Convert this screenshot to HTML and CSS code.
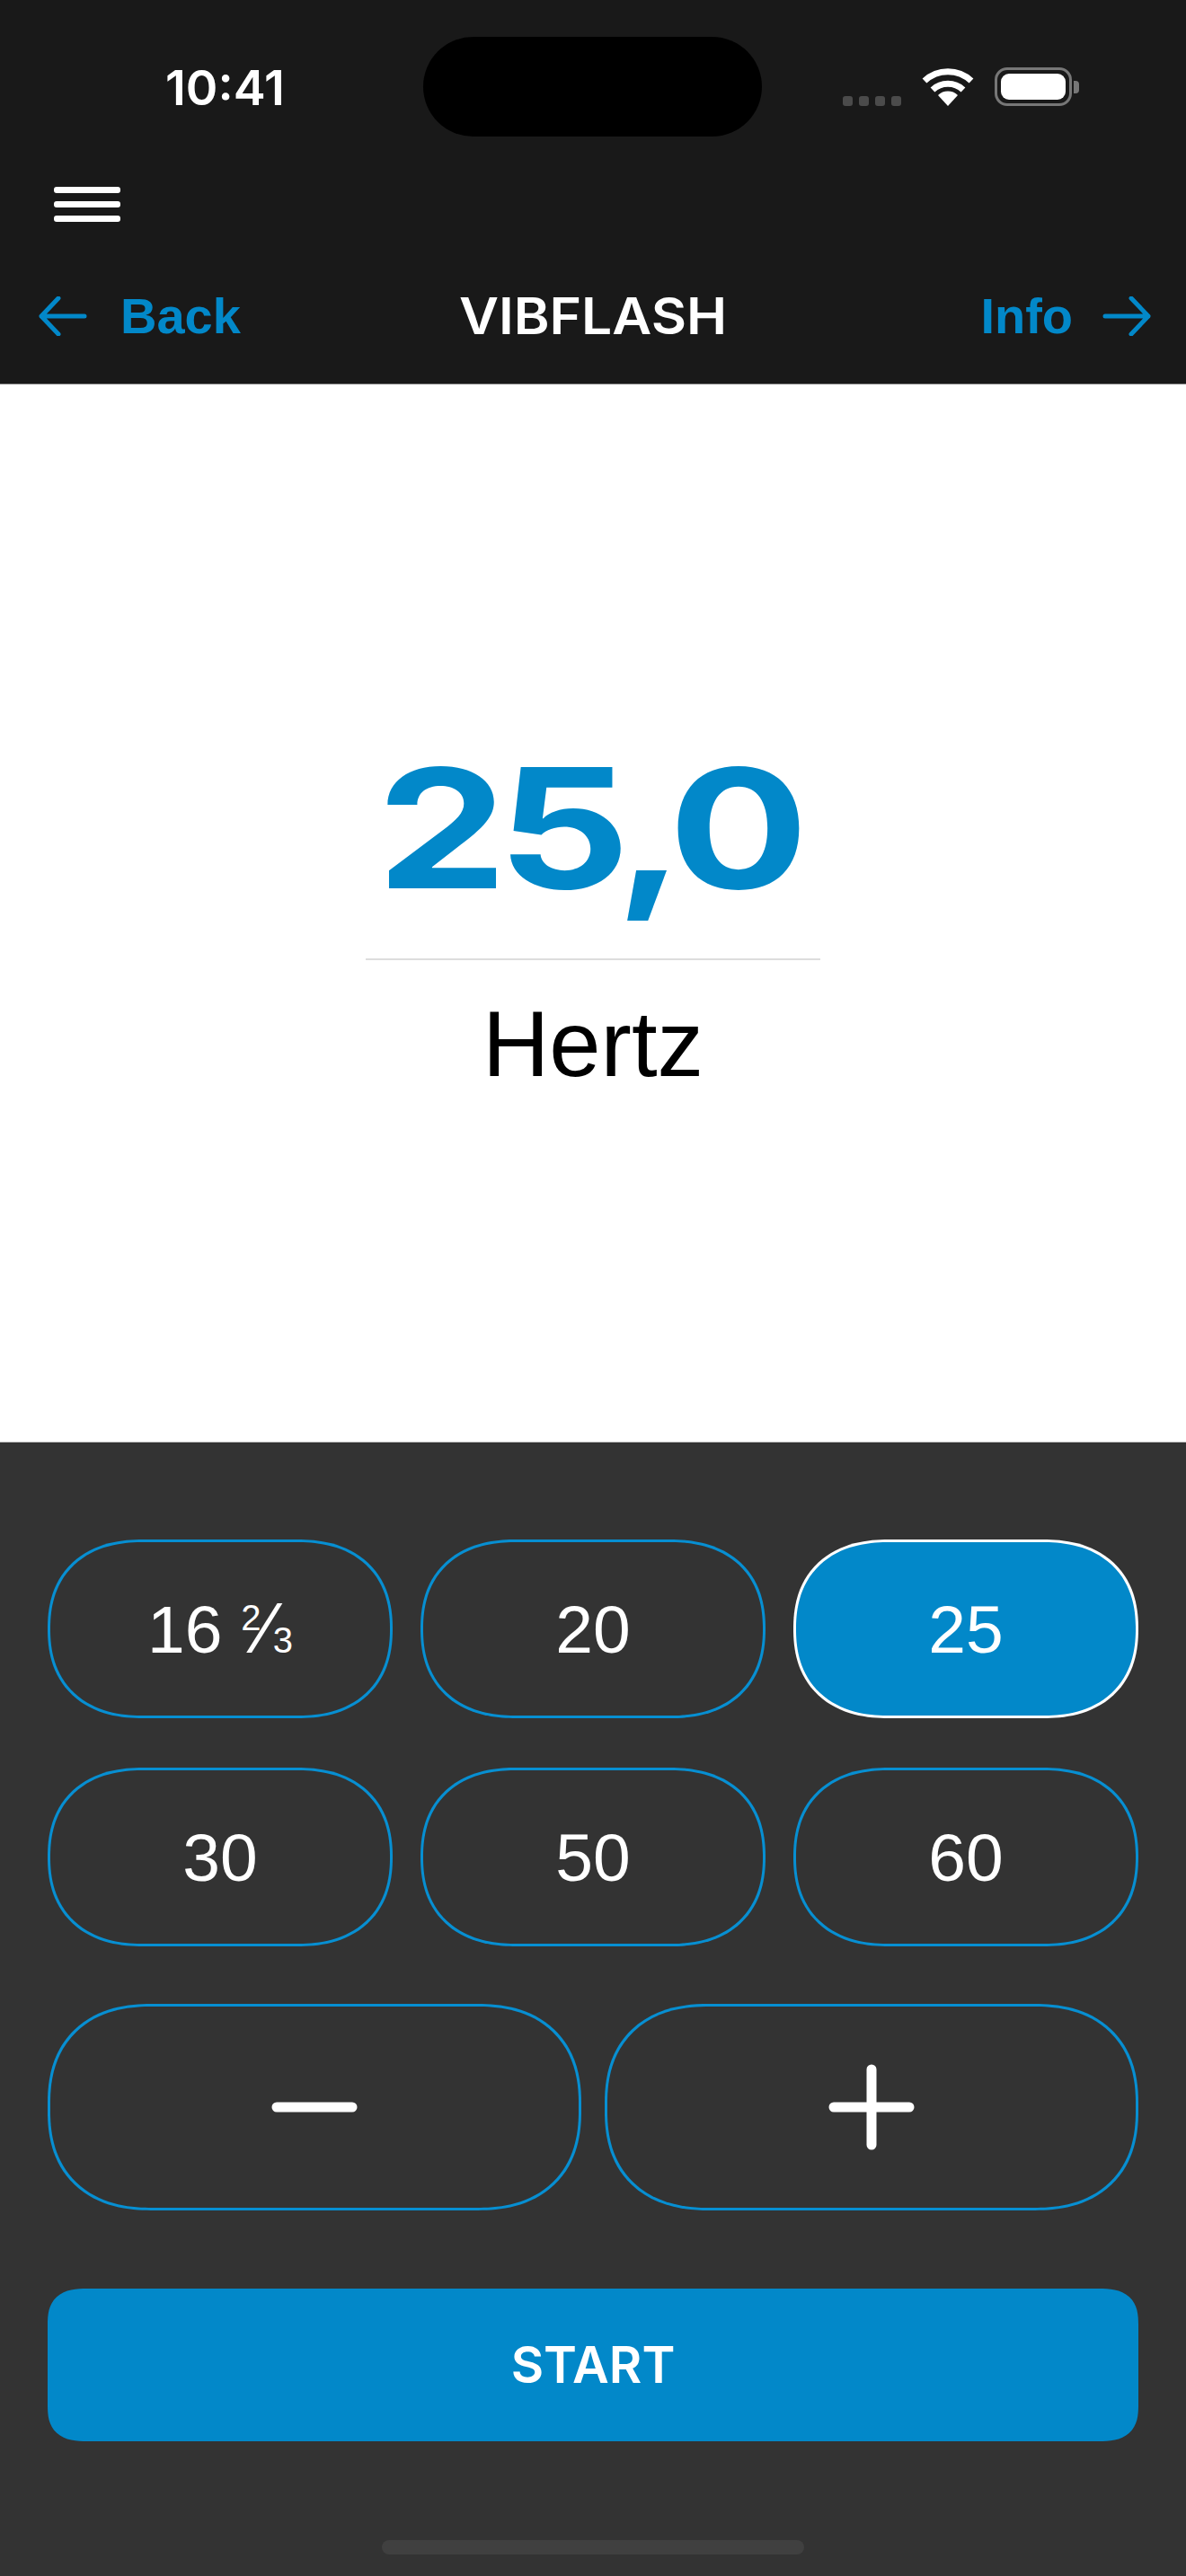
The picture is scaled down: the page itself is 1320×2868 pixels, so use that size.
FILE: index.html
```html
<!DOCTYPE html>
<html lang="de"><head>
<meta charset="utf-8">
<meta name="viewport" content="width=device-width, initial-scale=1.0">
<title>Vibflash</title>
<link rel="stylesheet" href="styles.css">
</head><body>

<div class="phone">

	<div class="header">
		<div class="status">
			<div class="time">10:41</div>
			<div class="island"></div>
			<div class="status-icons">
				<div class="cell"><span></span><span></span><span></span><span></span></div>
				<svg class="wifi" width="58" height="43" viewBox="0 0 58 43">
					<path d="M3 15 A38 38 0 0 1 55 15" />
					<path d="M12 25 A25 25 0 0 1 46 25" />
					<path class="wedge" d="M29 43 L18 31 A16 16 0 0 1 40 31 Z" />
				</svg>
				<div class="battery"><div class="battery-fill"></div></div>
				<div class="battery-cap"></div>
			</div>
		</div>

		<div class="menu-row">
			<div class="burger"><span></span><span></span><span></span></div>
		</div>

		<div class="nav">
			<a class="nav-link">
				<svg class="arrow" width="54" height="44" viewBox="0 0 54 44"><path d="M51 22 H3 M22 2 L3 22 L22 42" /></svg>
				Back
			</a>
			<div class="logo"><span>VIBFLASH</span></div>
			<a class="nav-link right">
				Info
				<svg class="arrow" width="54" height="44" viewBox="0 0 54 44"><path d="M3 22 H51 M32 2 L51 22 L32 42" /></svg>
			</a>
		</div>
	</div>

	<div class="display">
		<div class="value"><span>25,0</span></div>
		<div class="divider"></div>
		<div class="unit">Hertz</div>
	</div>

	<div class="controls">
		<div class="presets">
			<div class="pill"><div>16 <sup>2</sup><span class="slash">⁄</span><sub>3</sub></div></div>
			<div class="pill">20</div>
			<div class="pill active">25</div>
			<div class="pill">30</div>
			<div class="pill">50</div>
			<div class="pill">60</div>
		</div>
		<div class="steppers">
			<div class="step"><svg width="96" height="96" viewBox="0 0 96 96"><path d="M6 48 H90" /></svg></div>
			<div class="step"><svg width="96" height="96" viewBox="0 0 96 96"><path d="M6 48 H90 M48 6 V90" /></svg></div>
		</div>
		<div class="start">START</div>
		<div class="home-bar"></div>
	</div>

</div>

</body></html>
```

FILE: styles.css
```css
html, body {
	margin : 0 ;
	padding : 0 ;
	background-color : #333333 ;
	}
.phone {
	width : 1320px ;
	height : 2868px ;
	display : flex ;
	flex-direction : column ;
	overflow : hidden ;
	font-family : "Liberation Sans", Arial, sans-serif ;
	}

/* top bar */
.header {
	height : 427px ;
	flex : none ;
	background-color : #191919 ;
	border-bottom : 1px solid #777777 ;
	}
.status {
	height : 153px ;
	padding-top : 41px ;
	box-sizing : border-box ;
	display : flex ;
	}
.time {
	width : 471px ;
	padding : 30px 0 0 184px ;
	box-sizing : border-box ;
	color : white ;
	font : 600 54px/54px Inter, sans-serif ;
	}
.island {
	width : 377px ;
	height : 111px ;
	border-radius : 56px ;
	background-color : black ;
	}
.status-icons {
	display : flex ;
	align-items : flex-end ;
	height : 77px ;
	padding-left : 90px ;
	}
.cell {
	display : flex ;
	gap : 7px ;
	}
.cell span {
	width : 11px ;
	height : 11px ;
	border-radius : 3px ;
	background-color : #4b4b4b ;
	}
.wifi {
	margin-left : 23px ;
	fill : none ;
	stroke : white ;
	stroke-width : 7 ;
	}
.wifi .wedge {
	fill : white ;
	stroke : none ;
	}
.battery {
	width : 86px ;
	height : 43px ;
	margin-left : 23px ;
	padding : 4px ;
	box-sizing : border-box ;
	border : 3px solid #777777 ;
	border-radius : 14px ;
	}
.battery-fill {
	height : 100% ;
	border-radius : 9px ;
	background-color : white ;
	}
.battery-cap {
	width : 6px ;
	height : 14px ;
	margin : 0 0 14px 2px ;
	border-radius : 0 4px 4px 0 ;
	background-color : #777777 ;
	}
.menu-row {
	padding : 55px 0 0 60px ;
	}
.burger {
	width : 74px ;
	display : flex ;
	flex-direction : column ;
	gap : 9.5px ;
	}
.burger span {
	height : 6.5px ;
	border-radius : 3px ;
	background-color : white ;
	}
.nav {
	margin-top : 83px ;
	padding : 0 39px 0 43px ;
	height : 44px ;
	display : grid ;
	grid-template-columns : 1fr auto 1fr ;
	align-items : center ;
	}
.nav-link {
	display : flex ;
	align-items : center ;
	gap : 37px ;
	color : #0288c9 ;
	font : 700 56px/44px "Liberation Sans", Arial, sans-serif ;
	}
.nav-link.right {
	justify-content : flex-end ;
	gap : 33px ;
	}
.arrow {
	fill : none ;
	stroke : #0288c9 ;
	stroke-width : 5 ;
	stroke-linecap : round ;
	stroke-linejoin : round ;
	}
.logo {
	margin-left : -3px ;
	color : white ;
	font : 600 56px/44px Inter, sans-serif ;
	}
.logo span {
	display : inline-block ;
	transform : scaleX( 1.08 ) ;
	}

/* frequency read-out */
.display {
	flex : 1 ;
	background-color : white ;
	border-bottom : 1px solid #c4c4c4 ;
	display : flex ;
	flex-direction : column ;
	align-items : center ;
	padding-top : 374px ;
	}
.value {
	height : 240px ;
	margin-left : -12px ;
	color : #0288c9 ;
	font : 700 185px/240px Inter, sans-serif ;
	letter-spacing : -9px ;
	}
.value span {
	display : inline-block ;
	transform : scaleX( 1.25 ) ;
	}
.divider {
	width : 506px ;
	height : 2px ;
	margin-top : 25px ;
	background-color : #dddddd ;
	}
.unit {
	margin-top : 42px ;
	color : black ;
	font-size : 103px ;
	line-height : 103px ;
	}

/* lower panel */
.controls {
	height : 1262px ;
	flex : none ;
	box-sizing : border-box ;
	padding : 108px 53px 0 ;
	background-color : #333333 ;
	display : flex ;
	flex-direction : column ;
	}
.presets {
	display : grid ;
	grid-template-columns : repeat( 3, 384px ) ;
	grid-auto-rows : 199px ;
	column-gap : 31px ;
	row-gap : 55px ;
	}
.pill {
	display : flex ;
	align-items : center ;
	justify-content : center ;
	box-sizing : border-box ;
	border : 3px solid #078fd2 ;
	border-radius : 106px / 99px ;
	corner-shape : superellipse( 1.2 ) ;
	color : white ;
	font-size : 75px ;
	}
.pill.active {
	background-color : #0288c9 ;
	border-color : white ;
	}
.pill sup, .pill sub {
	font-size : 40px ;
	line-height : 0 ;
	}
.pill sup {
	vertical-align : 25px ;
	}
.pill sub {
	vertical-align : baseline ;
	}
.pill .slash {
	font-size : 80px ;
	line-height : 0 ;
	}
.steppers {
	margin-top : 64px ;
	display : flex ;
	gap : 26px ;
	}
.step {
	flex : 1 ;
	height : 230px ;
	box-sizing : border-box ;
	display : flex ;
	align-items : center ;
	justify-content : center ;
	border : 3px solid #078fd2 ;
	border-radius : 115px / 110px ;
	corner-shape : superellipse( 1.2 ) ;
	}
.step svg {
	fill : none ;
	stroke : white ;
	stroke-width : 11 ;
	stroke-linecap : round ;
	}
.start {
	margin-top : 87px ;
	height : 170px ;
	display : flex ;
	align-items : center ;
	justify-content : center ;
	border-radius : 44px / 40px ;
	corner-shape : superellipse( 1.4 ) ;
	background-color : #0288c9 ;
	color : white ;
	font : 600 56px Inter, sans-serif ;
	}
.home-bar {
	width : 470px ;
	height : 16px ;
	margin : 110px auto 0 ;
	border-radius : 8px ;
	background-color : #404040 ;
	}
```
